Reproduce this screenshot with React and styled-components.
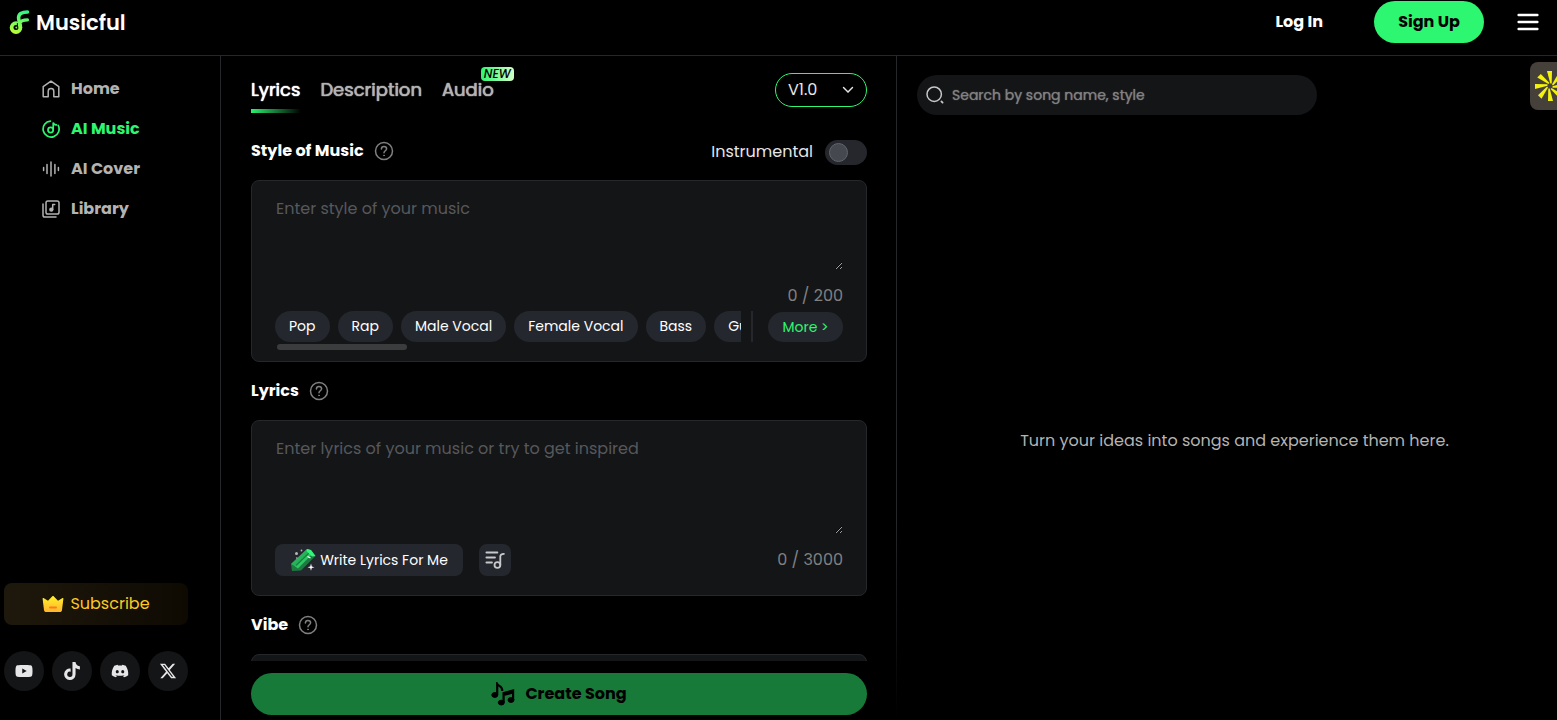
import React, { useState } from 'react';
import styled, { createGlobalStyle, css } from 'styled-components';
import { FaYoutube, FaTiktok, FaDiscord, FaXTwitter } from 'react-icons/fa6';

const chips = ['Pop', 'Rap', 'Male Vocal', 'Female Vocal', 'Bass', 'Guitar'];

const tabs = [{ name: 'Lyrics' }, { name: 'Description' }, { name: 'Audio', isNew: true }];

const socials = [
  { name: 'YouTube', Icon: FaYoutube },
  { name: 'TikTok', Icon: FaTiktok },
  { name: 'Discord', Icon: FaDiscord },
  { name: 'X', Icon: FaXTwitter },
];

const LogoIcon = () => (
  <svg width="22" height="26" viewBox="0 0 22 26" fill="none">
    <defs>
      <linearGradient id="logo" x1="14" y1="0" x2="6" y2="26" gradientUnits="userSpaceOnUse">
        <stop stopColor="#2cf58a" />
        <stop offset="1" stopColor="#c8ff2e" />
      </linearGradient>
    </defs>
    <g stroke="url(#logo)" strokeLinecap="round" strokeLinejoin="round">
      <circle cx="7" cy="17.6" r="4.4" strokeWidth="3.8" />
      <path d="M11.4 17.6C11.4 13 9.6 11 9.6 7.8C9.6 4 12.5 2 18.5 2" strokeWidth="3.6" />
      <path d="M11 12.6C12 10.6 14.5 10 18.5 9.8" strokeWidth="3.2" />
    </g>
    <circle cx="7.4" cy="17.6" r="1" fill="#8df850" />
    <path d="M8.4 17.6v-4.5" stroke="#000" strokeWidth="1" />
  </svg>
);

const HomeIcon = () => (
  <svg width="18" height="18" viewBox="0 0 18 18" fill="none" stroke="currentColor" strokeWidth="1.5" strokeLinejoin="round">
    <path d="M1.2 6.6 9 1.2l7.8 5.4v10.2h-5v-5.6c0-1.7-1-2.6-2.8-2.6s-2.8.9-2.8 2.6v5.6H1.2z" />
  </svg>
);

const MusicIcon = () => (
  <svg width="18" height="18" viewBox="0 0 18 18" fill="none" stroke="currentColor" strokeWidth="1.7" strokeLinecap="round">
    <path d="M8.4 1.1A8 8 0 1 0 16.2 5.4" />
    <circle cx="8.6" cy="10" r="2.6" />
    <path d="M11.2 10V2.4c.3 2 1.5 2.5 3.2 2.4" />
  </svg>
);

const CoverIcon = () => (
  <svg width="18" height="18" viewBox="0 0 18 18" stroke="currentColor" strokeWidth="1.5" strokeLinecap="round">
    <path d="M1.6 7.6v2.8M5 4.6v8.8M9 2v14M12.9 4.6v8.8M16.4 7.4v3.2" />
  </svg>
);

const LibraryIcon = () => (
  <svg width="18" height="18" viewBox="0 0 18 18" fill="none" stroke="currentColor" strokeWidth="1.5" strokeLinecap="round" strokeLinejoin="round">
    <rect x="4" y="1" width="13" height="13" rx="1.8" />
    <path d="M1 4v11.2c0 1.200.6 1.800 1.800 1.800H14" />
    <circle cx="9.3" cy="9.7" r="1.4" fill="currentColor" />
    <path d="M10.7 9.6V4.4h2" />
  </svg>
);

const HelpIcon = () => (
  <svg width="20" height="20" viewBox="0 0 20 20" fill="none" stroke="currentColor" strokeWidth="1.5" strokeLinecap="round">
    <circle cx="10" cy="10" r="8.5" />
    <path d="M7.4 8c0-1.6 1.1-2.6 2.6-2.6s2.6 1 2.6 2.4c0 1.9-2.6 2-2.6 4" />
    <circle cx="10" cy="14.4" r=".5" fill="currentColor" strokeWidth=".8" />
  </svg>
);

const ChevronIcon = () => (
  <svg width="12" height="8" viewBox="0 0 12 8" fill="none" stroke="currentColor" strokeWidth="1.4" strokeLinecap="round">
    <path d="m1.5 1.5 4.5 4.6 4.5-4.6" />
  </svg>
);

const SearchIcon = () => (
  <svg width="18" height="18" viewBox="0 0 18 18" fill="none" stroke="currentColor" strokeWidth="1.5" strokeLinecap="round">
    <circle cx="8.2" cy="8.2" r="7.2" />
    <path d="m15.4 15.4 1.2 1.2" strokeWidth="1.8" />
  </svg>
);

const MenuIcon = () => (
  <svg width="22" height="18" viewBox="0 0 22 18" stroke="currentColor" strokeWidth="2.4" strokeLinecap="round">
    <path d="M1.6 2h18.8M1.6 9h18.8M1.6 16h18.8" />
  </svg>
);

const WandIcon = () => (
  <svg width="26" height="24" viewBox="0 0 26 24">
    <path d="M1 16 17 1l4 1 4.5 6-14.5 14.5-9 .5z" fill="#1d7a41" />
    <path d="M1 16 17 1l3.5 1.2L4.5 18z" fill="#27b35a" />
    <path d="M4.5 18 20.5 2.2l2.5 3L8 20.5z" fill="#2bc864" />
    <path d="M6 17.5 19 5" stroke="#17813c" strokeWidth="1.2" />
    <path d="m17 1 4 1 4.5 6-3.5.5-5.5-5.500z" fill="#35f57a" />
    <path d="m17.5 8.5 3 1.5" stroke="#fff" strokeWidth="1.3" />
    <path d="m21 15.500.8 3 2.700.8-2.700.8-.8 2.700-.8-2.700-2.700-.8 2.700-.8z" fill="#fff" />
    <circle cx="6.5" cy="5.5" r="1.5" fill="#b5b7b9" />
    <circle cx="11.5" cy="2.5" r=".9" fill="#b5b7b9" />
    <circle cx="6.8" cy="10" r=".8" fill="#b5b7b9" />
  </svg>
);

const PlaylistIcon = () => (
  <svg width="20" height="20" viewBox="0 0 20 20" fill="none" stroke="currentColor" strokeWidth="1.8" strokeLinecap="round">
    <path d="M1.4 2.5h11M1.4 7.5h8.6M1.4 12.5h5.6" />
    <circle cx="12.4" cy="15" r="2.9" />
    <path d="M15.3 15V6.2c0-1.6 1.2-2.2 3.600-2.400" />
  </svg>
);

const NotesIcon = () => (
  <svg width="24" height="24" viewBox="0 0 24 24" fill="currentColor" stroke="currentColor">
    <ellipse cx="3.8" cy="13" rx="3" ry="2.4" />
    <path d="M6.2 13V2c1.5 2.4 5.5 2 5 7" fill="none" strokeWidth="2.2" />
    <ellipse cx="10.3" cy="20.6" rx="3" ry="2.4" />
    <ellipse cx="20" cy="18" rx="3" ry="2.4" />
    <path d="M12.6 20.5V11l9.5-2.5v9.5M12.6 13l9.500-2.500" fill="none" strokeWidth="2.2" />
  </svg>
);

const CrownIcon = () => (
  <svg width="22" height="18" viewBox="0 0 22 18">
    <defs>
      <linearGradient id="crown" x1="0" y1="0" x2="0" y2="1">
        <stop stopColor="#fff02a" />
        <stop offset="1" stopColor="#ffb52e" />
      </linearGradient>
    </defs>
    <path
      d="M1.5 3 6 5.800 10.100 1.500c.6-.6 1.200-.6 1.800 0L16 5.800 20.500 3c.7-.3 1 .1.900.8L20 15c-.2 1.500-.9 2-2.200 2H4.200C2.900 17 2.200 16.500 2 15L.6 3.800c-.1-.7.2-1.100.9-.8z"
      fill="url(#crown)"
    />
    <rect x="7" y="11.5" width="8" height="2" rx="1" fill="#ff7a1a" />
  </svg>
);

const BurstIcon = () => (
  <svg width="30" height="30" viewBox="0 0 30 30" fill="#f2f20d">
    {[0, 45, 90, 135, 180, 225, 270, 315].map((deg) => (
      <path key={deg} d="M12 0h5l-.3 12.500h-1.400z" transform={`rotate(${deg} 15 15)`} />
    ))}
  </svg>
);

const navItems = [
  { name: 'Home', Icon: HomeIcon },
  { name: 'AI Music', Icon: MusicIcon },
  { name: 'AI Cover', Icon: CoverIcon },
  { name: 'Library', Icon: LibraryIcon },
];

const App = () => {
  const [tab, setTab] = useState('Lyrics');
  const [style, setStyle] = useState('');
  const [lyrics, setLyrics] = useState('');

  return (
    <StPage>
      <GlobalStyle />
      <StHeader>
        <StLogo href="#">
          <LogoIcon />
          Musicful
        </StLogo>
        <StHeaderMenu>
          <StLogin type="button">Log In</StLogin>
          <StSignUp type="button">Sign Up</StSignUp>
          <StMenuButton type="button" aria-label="Menu">
            <MenuIcon />
          </StMenuButton>
        </StHeaderMenu>
      </StHeader>

      <StBody>
        <StSidebar>
          <StNav>
            {navItems.map(({ name, Icon }) => (
              <StNavItem key={name} href="#" $active={name === 'AI Music'}>
                <Icon />
                {name}
              </StNavItem>
            ))}
          </StNav>
          <div>
            <StSubscribe type="button">
              <CrownIcon />
              Subscribe
            </StSubscribe>
            <StSocials>
              {socials.map(({ name, Icon }) => (
                <StSocial key={name} href="#" aria-label={name}>
                  <Icon size={18} />
                </StSocial>
              ))}
            </StSocials>
          </div>
        </StSidebar>

        <StCreate>
          <StForm>
            <StTopRow>
              <StTabs>
                {tabs.map(({ name, isNew }) => (
                  <StTab key={name} type="button" $active={tab === name} onClick={() => setTab(name)}>
                    {name}
                    {isNew && <StNew>NEW</StNew>}
                  </StTab>
                ))}
              </StTabs>
              <StVersion>
                <select aria-label="Version">
                  <option>V1.0</option>
                </select>
                <ChevronIcon />
              </StVersion>
            </StTopRow>

            <StHeadRow>
              <StLabel htmlFor="style">Style of Music</StLabel>
              <HelpIcon />
              <StSwitchLabel>
                Instrumental
                <StSwitch type="checkbox" />
              </StSwitchLabel>
            </StHeadRow>
            <StCard $bottom={11}>
              <StTextarea
                id="style"
                $height={74}
                maxLength={200}
                placeholder="Enter style of your music"
                value={style}
                onChange={(e) => setStyle(e.target.value)}
              />
              <StCountRow>
                <StCount>{style.length} / 200</StCount>
              </StCountRow>
              <StChipRow>
                <StChipScroll>
                  <StChips>
                    {chips.map((chip) => (
                      <StChip key={chip} type="button" onClick={() => setStyle(chip)}>
                        {chip}
                      </StChip>
                    ))}
                  </StChips>
                  <StThumb />
                </StChipScroll>
                <StDivider />
                <StMore type="button">More &gt;</StMore>
              </StChipRow>
            </StCard>

            <StHeadRow>
              <StLabel htmlFor="lyrics">Lyrics</StLabel>
              <HelpIcon />
            </StHeadRow>
            <StCard $bottom={19}>
              <StTextarea
                id="lyrics"
                $height={98}
                maxLength={3000}
                placeholder="Enter lyrics of your music or try to get inspired"
                value={lyrics}
                onChange={(e) => setLyrics(e.target.value)}
              />
              <StToolRow>
                <StWrite type="button">
                  <WandIcon />
                  Write Lyrics For Me
                </StWrite>
                <StSquare type="button" aria-label="Lyrics templates">
                  <PlaylistIcon />
                </StSquare>
                <StCount>{lyrics.length} / 3000</StCount>
              </StToolRow>
            </StCard>

            <StHeadRow>
              <StLabel htmlFor="vibe">Vibe</StLabel>
              <HelpIcon />
            </StHeadRow>
            <StCard $bottom={19}>
              <StTextarea id="vibe" $height={74} />
            </StCard>
          </StForm>
          <StFooter>
            <StCreateButton type="button">
              <NotesIcon />
              Create Song
            </StCreateButton>
          </StFooter>
        </StCreate>

        <StResult>
          <StSearch>
            <SearchIcon />
            <input type="text" aria-label="Search" placeholder="Search by song name, style" />
          </StSearch>
          <StEmpty>Turn your ideas into songs and experience them here.</StEmpty>
        </StResult>
      </StBody>

      <StWidget type="button" aria-label="Open widget">
        <BurstIcon />
      </StWidget>
    </StPage>
  );
};

export default App;

const GlobalStyle = createGlobalStyle`
  * {
    box-sizing: border-box;
  }

  body {
    margin: 0;
    background-color: #000;
    font-family: Poppins, Inter, 'Liberation Sans', sans-serif;
    font-size: 16px;
    line-height: 24px;
    color: #fff;
  }

  button, input, select, textarea {
    padding: 0;
    border: 0;
    background: none;
    font: inherit;
    color: inherit;
  }

  button {
    cursor: pointer;
  }

  a {
    color: inherit;
    text-decoration: none;
  }

  svg {
    flex-shrink: 0;
  }
`;

const flexCenter = css`
  display: flex;
  justify-content: center;
  align-items: center;
`;

const StPage = styled.div`
  display: flex;
  flex-direction: column;

  height: 100vh;
  overflow: hidden;
`;

const StHeader = styled.header`
  display: flex;
  justify-content: space-between;
  align-items: flex-start;

  height: 56px;
  padding: 1px 18px 0 9px;
  border-bottom: 1px solid #26272b;
`;

const StLogo = styled.a`
  display: flex;
  align-items: center;
  gap: 5px;

  height: 44px;
  font-size: 21px;
  font-weight: 600;
`;

const StHeaderMenu = styled.div`
  display: flex;
  align-items: center;
`;

const StLogin = styled.button`
  margin-right: 51px;
  font-weight: 700;
`;

const StSignUp = styled.button`
  width: 110px;
  height: 42px;
  margin-right: 33px;
  border-radius: 21px;
  background-color: #2df671;

  font-weight: 700;
  color: #000;
`;

const StMenuButton = styled.button`
  display: flex;
`;

const StBody = styled.div`
  display: flex;
  flex: 1;
  min-height: 0;
`;

const StSidebar = styled.aside`
  display: flex;
  flex-direction: column;
  justify-content: space-between;

  flex: 0 0 221px;
  padding: 21px 32px 29px 4px;
  border-right: 1px solid #26272b;
`;

const StNav = styled.nav`
  display: flex;
  flex-direction: column;
  gap: 16px;
  padding-left: 38px;
`;

const StNavItem = styled.a`
  display: flex;
  align-items: center;
  gap: 11px;

  font-weight: 700;
  color: ${({ $active }) => ($active ? '#2df671' : '#b3b3b3')};
`;

const StSubscribe = styled.button`
  ${flexCenter}
  gap: 6px;

  width: 100%;
  height: 42px;
  border-radius: 8px;
  background: linear-gradient(90deg, #1f180c, #0e0a02);
  color: #fdc921;
`;

const StSocials = styled.div`
  display: flex;
  gap: 8px;
  margin-top: 26px;
`;

const StSocial = styled.a`
  ${flexCenter}

  width: 40px;
  height: 40px;
  border-radius: 50%;
  background-color: #141517;
  color: #e6e6e8;
`;

const StCreate = styled.main`
  display: flex;
  flex-direction: column;

  flex: 0 1 676px;
  min-width: 0;
  border-right: 1px solid;
  border-image: linear-gradient(#26272b 70%, #000) 1;
`;

const StForm = styled.div`
  display: flex;
  flex-direction: column;
  gap: 8px;

  flex: 1;
  min-height: 0;
  overflow: hidden;
  padding: 17px 29px 0 30px;

  > * {
    flex-shrink: 0;
  }
`;

const StTopRow = styled.div`
  display: flex;
  justify-content: space-between;
  align-items: flex-start;
  height: 49px;
`;

const StTabs = styled.div`
  display: flex;
  gap: 20px;
`;

const StTab = styled.button`
  position: relative;
  height: 40px;
  padding-bottom: 6px;

  font-size: 18px;
  color: ${({ $active }) => ($active ? '#fff' : '#b3b3b3')};
  text-shadow: 0 0 1px currentColor, 0 0 1px currentColor;

  ${({ $active }) =>
    $active &&
    css`
      border-bottom: 4px solid;
      border-image: linear-gradient(90deg, #2df671, #000) 1;
      padding-bottom: 2px;
    `}
`;

const StNew = styled.span`
  position: absolute;
  top: -6px;
  right: -20px;

  width: 33px;
  border-radius: 4px;
  background: linear-gradient(90deg, #2df671, #d5ffc8);

  font-size: 12px;
  font-weight: 500;
  font-style: italic;
  line-height: 14px;
  color: #000;
  text-shadow: none;
`;

const StVersion = styled.div`
  display: grid;
  align-items: center;

  width: 92px;
  height: 34px;
  border: 1px solid #2df671;
  border-radius: 17px;
  color: #e6e6e6;

  select {
    grid-area: 1 / 1;
    height: 32px;
    padding-left: 12px;
    appearance: none;
    outline: 0;
  }

  svg {
    grid-area: 1 / 1;
    justify-self: end;
    margin-right: 12px;
    pointer-events: none;
  }
`;

const StHeadRow = styled.div`
  display: flex;
  align-items: center;
  gap: 10px;

  height: 42px;
  color: #808080;
`;

const StLabel = styled.label`
  font-weight: 700;
  color: #fff;
`;

const StSwitchLabel = styled.label`
  display: flex;
  align-items: center;
  gap: 12px;

  margin-left: auto;
  padding-top: 2px;
  color: #e6e6e6;
`;

const StSwitch = styled.input`
  display: flex;
  align-items: center;

  width: 42px;
  height: 25px;
  margin: 0;
  padding: 0 4px;
  border-radius: 13px;
  background-color: #26272d;
  appearance: none;

  &::before {
    content: '';
    width: 17px;
    height: 17px;
    border: 1px solid #62646b;
    border-radius: 50%;
    background-color: #46484f;
  }

  &:checked {
    justify-content: flex-end;
    background-color: #2df671;
  }
`;

const StCard = styled.section`
  padding: 15px 23px ${({ $bottom }) => $bottom}px;
  border: 1px solid #26272b;
  border-radius: 8px;
  background-color: #141517;
`;

const StTextarea = styled.textarea`
  display: block;
  width: 100%;
  height: ${({ $height }) => $height}px;
  padding: 1px;
  outline: 0;
  resize: vertical;

  &::placeholder {
    color: #56585c;
  }
`;

const StCountRow = styled.div`
  display: flex;
  margin: 14px 0 3px;
`;

const StCount = styled.span`
  margin-left: auto;
  color: #808080;
`;

const StChipRow = styled.div`
  display: flex;
  align-items: flex-start;
`;

const StChipScroll = styled.div`
  flex: 1;
  min-width: 0;
`;

const StChips = styled.div`
  display: flex;
  gap: 8px;
  overflow: hidden;
`;

const pill = css`
  flex-shrink: 0;
  border-radius: 16px;
  background-color: #25272e;
  font-size: 14px;
  white-space: nowrap;
`;

const StChip = styled.button`
  ${pill}
  height: 31px;
  padding: 0 14px 2px;
`;

const StThumb = styled.div`
  width: 130px;
  height: 6px;
  margin: 2px 0 0 2px;
  border-radius: 3px;
  background-color: #3a3c3e;
`;

const StDivider = styled.div`
  width: 2px;
  height: 31px;
  margin: 0 15px 0 10px;
  background-color: #26272d;
`;

const StMore = styled.button`
  ${pill}
  width: 75px;
  height: 30px;
  margin-top: 1px;
  color: #2df671;
`;

const StToolRow = styled.div`
  display: flex;
  align-items: center;
  gap: 16px;
  margin-top: 10px;
`;

const StWrite = styled.button`
  ${flexCenter}
  gap: 4px;

  width: 188px;
  height: 32px;
  border-radius: 8px;
  background-color: #25272e;
  font-size: 14px;
`;

const StSquare = styled.button`
  ${flexCenter}

  width: 32px;
  height: 32px;
  border-radius: 8px;
  background-color: #25272e;
  color: #c8c9cb;
`;

const StFooter = styled.div`
  padding: 12px 29px 5px 30px;
`;

const StCreateButton = styled.button`
  ${flexCenter}
  gap: 10px;

  width: 100%;
  height: 42px;
  border-radius: 21px;
  background-color: #187a39;

  font-weight: 700;
  color: #000;
`;

const StResult = styled.section`
  display: flex;
  flex-direction: column;

  flex: 1;
  min-width: 0;
  padding: 19px 5px 0 20px;
`;

const StSearch = styled.label`
  display: flex;
  align-items: center;
  gap: 8px;

  width: 400px;
  max-width: 100%;
  height: 40px;
  padding: 0 9px;
  border-radius: 20px;
  background-color: #141517;
  color: #c8c8c8;

  input {
    flex: 1;
    min-width: 0;
    outline: 0;
    font-size: 14px;
  }

  input::placeholder {
    color: #808080;
    text-shadow: 0 0 1px #808080;
  }
`;

const StEmpty = styled.p`
  ${flexCenter}

  flex: 1;
  margin: 0;
  padding-top: 47px;
  color: #b3b3b3;
`;

const StWidget = styled.button`
  position: fixed;
  top: 62px;
  right: 0;

  display: flex;
  align-items: center;

  width: 27px;
  height: 48px;
  padding-left: 5px;
  border-radius: 8px 0 0 8px;
  background-color: #46403b;
  overflow: hidden;
`;
